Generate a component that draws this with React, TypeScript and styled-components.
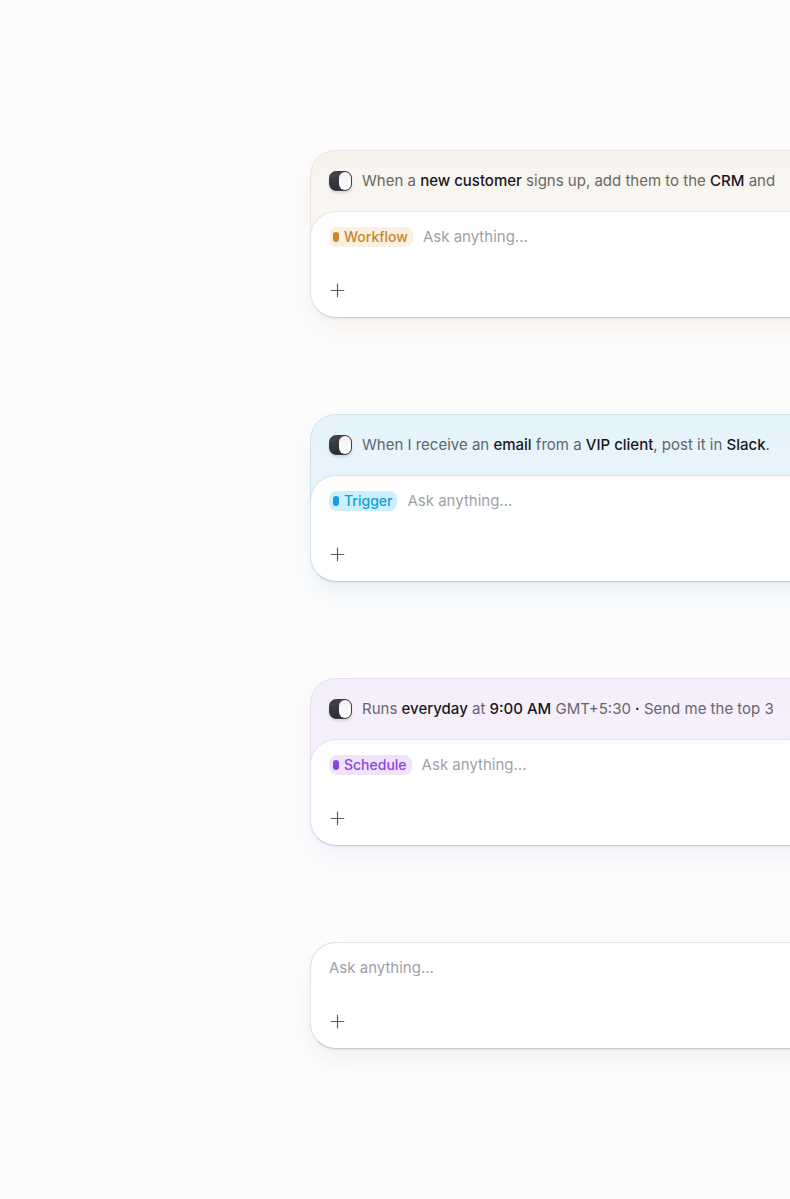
import React, { useState } from "react";
import styled, { createGlobalStyle } from "styled-components";

interface Tone {
  tint: string;
  tintTop: string;
  line: string;
  edge: string;
  glow: string;
  muted: string;
  chip: string;
  chipText: string;
}

const neutral: Tone = {
  tint: "#ffffff",
  tintTop: "#ffffff",
  line: "#e5e5e6",
  edge: "#c9c9cb",
  glow: "rgba(40, 40, 40, 0.07)",
  muted: "#66666b",
  chip: "#eeeeee",
  chipText: "#66666b",
};

const amber: Tone = {
  tint: "#f9f5f0",
  tintTop: "#f6f2ed",
  line: "#ece6e0",
  edge: "#d8cfc8",
  glow: "rgba(150, 90, 50, 0.08)",
  muted: "#6b6762",
  chip: "#faf0e1",
  chipText: "#c8862f",
};

const sky: Tone = {
  tint: "#e7f4fb",
  tintTop: "#e4f2f9",
  line: "#d5e5ee",
  edge: "#bccdd9",
  glow: "rgba(50, 130, 200, 0.1)",
  muted: "#5c676d",
  chip: "#cdeefb",
  chipText: "#129fdb",
};

const violet: Tone = {
  tint: "#f6f0fd",
  tintTop: "#f3eefa",
  line: "#e8e0f0",
  edge: "#d0c9da",
  glow: "rgba(130, 80, 200, 0.08)",
  muted: "#69636f",
  chip: "#f0e4fd",
  chipText: "#8a46e0",
};

const GlobalStyle = createGlobalStyle`
  *, *::before, *::after { box-sizing: border-box; }
  body {
    margin: 0;
    background: #fcfcfc;
    font-family: Inter, "Liberation Sans", sans-serif;
    font-size: 15px;
    line-height: 24px;
    -webkit-font-smoothing: antialiased;
  }
`;

const Page = styled.main`
  display: flex;
  flex-direction: column;
  gap: 96px;
  min-height: 100vh;
  padding: 150px 0 150px 310px;
  overflow: hidden;
`;

const Card = styled.form<{ $tone: Tone }>`
  min-width: 640px;
  border-radius: 26px;
  background: linear-gradient(${(p) => p.$tone.tintTop}, ${(p) => p.$tone.tint} 32px);
  box-shadow:
    inset 0 0 0 1px ${(p) => p.$tone.line},
    0 12px 24px -4px ${(p) => p.$tone.glow};
`;

const Header = styled.div<{ $tone: Tone }>`
  display: flex;
  align-items: center;
  gap: 10px;
  height: 61px;
  padding: 1px 19px 0;
  color: ${(p) => p.$tone.muted};
  white-space: nowrap;
`;

const Sentence = styled.p`
  margin: 0;
`;

const Strong = styled.strong`
  color: #18181c;
  font-weight: 500;
`;

const Toggle = styled.input`
  appearance: none;
  display: flex;
  flex: none;
  width: 23px;
  height: 20px;
  margin: 0;
  border: 1px solid #3c3d46;
  border-radius: 7px;
  background: linear-gradient(#42434d, #2b2c34);
  box-shadow: 0 2px 3px rgba(0, 0, 0, 0.12);
  cursor: pointer;

  &::after {
    content: "";
    width: 12px;
    height: 18px;
    border-radius: 6px;
    background: linear-gradient(#f1f1f1, #ffffff);
  }

  &:checked::after {
    margin-left: auto;
  }
`;

const Panel = styled.div<{ $tone: Tone }>`
  display: flex;
  flex-direction: column;
  justify-content: space-between;
  height: 107px;
  padding: 13px 18px 15px;
  border: 1px solid ${(p) => p.$tone.line};
  border-bottom-color: ${(p) => p.$tone.edge};
  border-radius: 26px;
  background: linear-gradient(#fdfdfd, #ffffff 24px);
  box-shadow: 0 1px 2px ${(p) => p.$tone.glow};
`;

const PromptRow = styled.div`
  display: flex;
  align-items: center;
  gap: 10px;
`;

const Chip = styled.label<{ $tone: Tone }>`
  display: flex;
  align-items: center;
  gap: 5px;
  height: 20px;
  padding: 0 5px 0 4px;
  border-radius: 8px;
  background: ${(p) => p.$tone.chip};
  color: ${(p) => p.$tone.chipText};
  font-size: 14px;
  font-weight: 500;

  &::before {
    content: "";
    width: 6px;
    height: 10px;
    border-radius: 3px;
    background: currentColor;
  }
`;

const Prompt = styled.input`
  flex: 1;
  min-width: 0;
  height: 24px;
  padding: 0;
  border: 0;
  outline: 0;
  background: transparent;
  color: #18181c;
  font: inherit;

  &::placeholder {
    color: #a1a1a6;
    opacity: 1;
  }
`;

const AddButton = styled.button`
  display: flex;
  align-items: center;
  justify-content: center;
  width: 17px;
  height: 24px;
  padding: 0;
  border: 0;
  background: none;
  color: #5f5f64;
  cursor: pointer;
`;

function PlusIcon() {
  return (
    <svg width="15" height="15" viewBox="0 0 15 15" fill="none" stroke="currentColor" strokeWidth="1.2" strokeLinecap="round" aria-hidden="true">
      <path d="M7.5 1.2v12.6M1.2 7.5h12.6" />
    </svg>
  );
}

interface ComposerProps {
  id: string;
  tone?: Tone;
  label?: string;
  children?: React.ReactNode;
}

function Composer({ id, tone = neutral, label, children }: ComposerProps) {
  const [enabled, setEnabled] = useState(true);
  return (
    <Card $tone={tone} onSubmit={(e) => e.preventDefault()}>
      {children && (
        <Header $tone={tone}>
          <Toggle
            type="checkbox"
            aria-label={`Enable ${label}`}
            checked={enabled}
            onChange={(e) => setEnabled(e.target.checked)}
          />
          <Sentence>{children}</Sentence>
        </Header>
      )}
      <Panel $tone={tone}>
        <PromptRow>
          {label && (
            <Chip $tone={tone} htmlFor={id}>
              {label}
            </Chip>
          )}
          <Prompt id={id} type="text" placeholder="Ask anything..." aria-label={label ? undefined : "Prompt"} />
        </PromptRow>
        <AddButton type="button" aria-label="Add attachment">
          <PlusIcon />
        </AddButton>
      </Panel>
    </Card>
  );
}

export default function App() {
  return (
    <>
      <GlobalStyle />
      <Page>
        <Composer id="workflow" tone={amber} label="Workflow">
          When a <Strong>new customer</Strong> signs up, add them to the <Strong>CRM</Strong> and
        </Composer>
        <Composer id="trigger" tone={sky} label="Trigger">
          When I receive an <Strong>email</Strong> from a <Strong>VIP client</Strong>, post it in{" "}
          <Strong>Slack</Strong>.
        </Composer>
        <Composer id="schedule" tone={violet} label="Schedule">
          Runs <Strong>everyday</Strong> at <Strong>9:00 AM</Strong> GMT+5:30 <Strong>·</Strong> Send me the top 3
        </Composer>
        <Composer id="plain" />
      </Page>
    </>
  );
}
